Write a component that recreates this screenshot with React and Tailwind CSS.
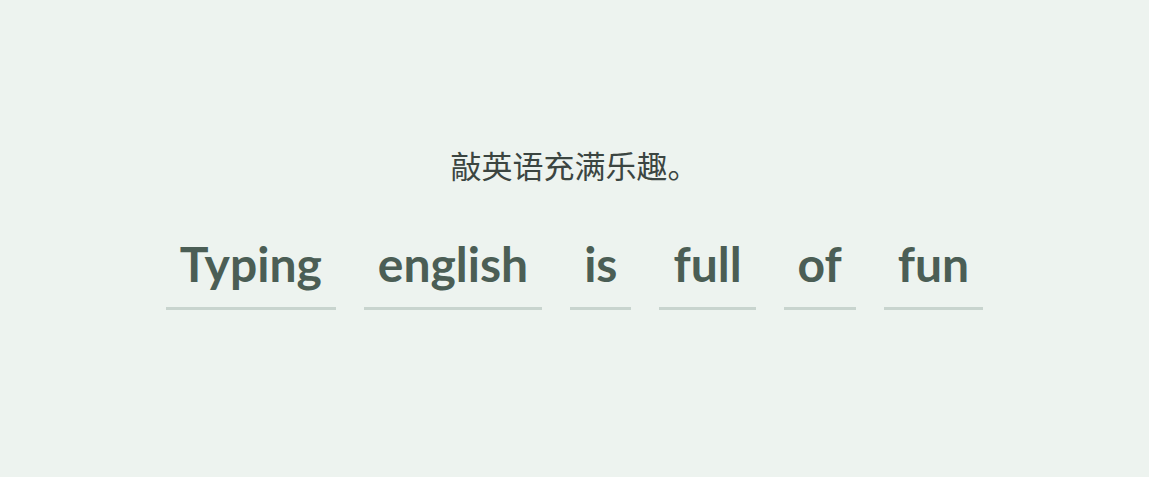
const words = ['Typing', 'english', 'is', 'full', 'of', 'fun'];

export default function App() {
  return (
    <div className="min-h-screen w-full bg-[#edf3ef] flex flex-col items-center pt-[146px]">
      <div
        className="text-[31px] leading-[37px] text-[#3b4541]"
        style={{ fontFamily: '"Noto Sans CJK SC", "Noto Sans", sans-serif' }}
      >
        敲英语充满乐趣。
      </div>
      <div className="mt-[57px] flex items-end gap-7">
        {words.map((w) => (
          <div
            key={w}
            className="px-[14px] pb-[19px] border-b-[3px] border-[#c8d4ce] text-[48px] leading-none font-bold text-[#4b5e55]"
            style={{ fontFamily: 'Lato, "Noto Sans", sans-serif' }}
          >
            {w}
          </div>
        ))}
      </div>
    </div>
  );
}
